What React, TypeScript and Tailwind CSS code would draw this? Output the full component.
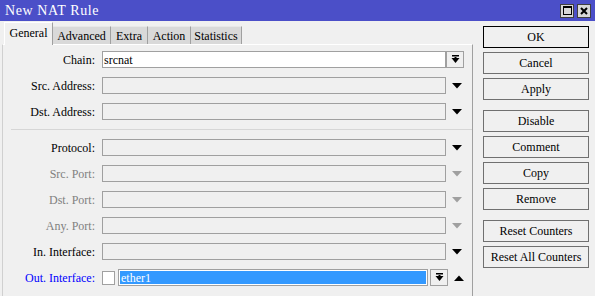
function DownArrow({ gray }: { gray?: boolean }) {
  return (
    <svg width="10" height="6" viewBox="0 0 10 6">
      <path d="M0 0 L10 0 L5 5.5 Z" fill={gray ? "#a0a0a0" : "#000"} />
    </svg>
  );
}

function UpArrow() {
  return (
    <svg width="10" height="6" viewBox="0 0 10 6">
      <path d="M0 6 L10 6 L5 0.5 Z" fill="#000" />
    </svg>
  );
}

function DropButton() {
  return (
    <div className="flex h-[17px] w-[18px] items-center justify-center border border-[#a0a0a0] bg-[#f0f0f0]">
      <svg width="9" height="10" viewBox="0 0 9 10">
        <rect x="1" y="0" width="7" height="1.5" fill="#000" />
        <path d="M0.5 3 L8.5 3 L4.5 8 Z" fill="#000" />
        <rect x="3.5" y="2" width="2" height="2" fill="#000" />
      </svg>
    </div>
  );
}

type Row = { label: string; tone?: "gray" | "blue" };

function FieldRow({ label, tone }: Row) {
  const color = tone === "gray" ? "text-[#808080]" : "text-black";
  return (
    <div className="flex h-[17px] items-center">
      <div className={`w-[92px] text-right text-[12px] ${color}`}>{label}</div>
      <div className="ml-[7px] h-[17px] w-[344px] border border-[#a0a0a0] bg-[#f0f0f0]" />
      <div className="flex w-[21px] justify-center">
        <DownArrow gray={tone === "gray"} />
      </div>
    </div>
  );
}

const tabs = [
  { name: "General", w: "w-[49px]" },
  { name: "Advanced", w: "w-[58px]" },
  { name: "Extra", w: "w-[37px]" },
  { name: "Action", w: "w-[43px]" },
  { name: "Statistics", w: "w-[51px]" },
];

const buttons = [
  ["OK", "Cancel", "Apply"],
  ["Disable", "Comment", "Copy", "Remove"],
  ["Reset Counters", "Reset All Counters"],
];

export default function App() {
  return (
    <div
      className="h-[296px] w-[595px] overflow-hidden bg-[#f0f0f0] text-black"
      style={{ fontFamily: '"Liberation Serif", "Times New Roman", serif' }}
    >
      <div className="flex h-[21px] items-center justify-between bg-[#4b4fc8] pl-[5px] pr-[4px]">
        <span className="text-[14px] tracking-[0.6px] text-white">New NAT Rule</span>
        <div className="flex gap-[3px]">
          <div className="flex h-[14px] w-[14px] items-center justify-center border border-[#404040] bg-[#d8d8d8]">
            <div className="h-[9px] w-[9px] border border-t-2 border-black" />
          </div>
          <div className="flex h-[14px] w-[14px] items-center justify-center border border-[#404040] bg-[#d8d8d8]">
            <svg width="8" height="8" viewBox="0 0 8 8">
              <path d="M1 1 L7 7 M7 1 L1 7" stroke="#000" strokeWidth="2" />
            </svg>
          </div>
        </div>
      </div>

      <div className="flex">
        <div className="w-[473px] pl-[2px] pt-[1px]">
          <div className="flex h-[22px] items-end pl-[2px]">
            {tabs.map((t, i) =>
              i === 0 ? (
                <div
                  key={t.name}
                  className={`relative z-10 -mb-px flex h-[23px] ${t.w} items-center justify-center border-l border-r border-t border-l-[#ffffff] border-r-[#a0a0a0] border-t-[#ffffff] bg-[#f0f0f0] pb-[2px] text-[12px]`}
                >
                  {t.name}
                </div>
              ) : (
                <div
                  key={t.name}
                  className={`flex h-[18px] ${t.w} items-center justify-center border-r border-t border-r-[#a0a0a0] border-t-[#e8e8e8] bg-[#d9d9d9] text-[12px]`}
                >
                  {t.name}
                </div>
              )
            )}
          </div>
          <div className="flex h-[260px] w-[471px] flex-col gap-[9px] border-l border-r border-t border-l-[#d0d0d0] border-r-[#a0a0a0] border-t-[#ffffff] pt-[6px]">
            <div className="flex h-[17px] items-center">
              <div className="w-[92px] text-right text-[12px]">Chain:</div>
              <div className="ml-[7px] flex h-[17px] w-[344px] items-center border border-[#a0a0a0] bg-white pl-[1px] text-[12px]">
                srcnat
              </div>
              <DropButton />
            </div>
            <FieldRow label="Src. Address:" />
            <FieldRow label="Dst. Address:" />
            <div className="ml-[8px] h-px bg-[#d6d6d6]" />
            <FieldRow label="Protocol:" />
            <FieldRow label="Src. Port:" tone="gray" />
            <FieldRow label="Dst. Port:" tone="gray" />
            <FieldRow label="Any. Port:" tone="gray" />
            <FieldRow label="In. Interface:" />
            <div className="flex h-[17px] items-center">
              <div className="w-[92px] text-right text-[12px] text-[#0000ff]">Out. Interface:</div>
              <div className="ml-[7px] h-[14px] w-[13px] border border-[#a0a0a0] bg-white" />
              <div className="ml-[3px] flex h-[17px] w-[310px] items-center border border-[#a0a0a0] bg-[#3399ff] pl-[2px] text-[12px] text-white ring-1 ring-inset ring-white">
                ether1
              </div>
              <div className="ml-[2px]">
                <DropButton />
              </div>
              <div className="flex w-[21px] justify-center">
                <UpArrow />
              </div>
            </div>
          </div>
        </div>

        <div className="ml-[10px] flex w-[106px] flex-col gap-[10px] pt-[5px]">
          {buttons.map((group, gi) => (
            <div key={gi} className="flex flex-col gap-[4px]">
              {group.map((b) => (
                <div
                  key={b}
                  className={`flex h-[22px] items-center justify-center border bg-[#f0f0f0] text-[12px] ${
                    b === "OK" ? "border-black" : "border-[#707070]"
                  }`}
                >
                  {b}
                </div>
              ))}
            </div>
          ))}
        </div>
      </div>
    </div>
  );
}
